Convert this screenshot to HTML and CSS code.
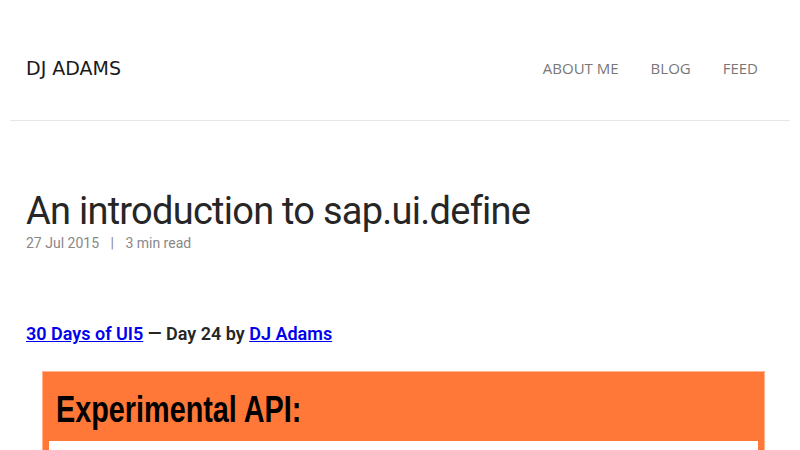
FILE: index.html
```html
<!DOCTYPE html>
<html lang="en">
<head>
<meta charset="utf-8">
<title>An introduction to sap.ui.define</title>
<link rel="stylesheet" href="styles.css">
</head>
<body>
<div class="page">
  <header class="site-header">
    <a class="brand" href="#">DJ ADAMS</a>
    <nav class="nav">
      <a href="#">ABOUT ME</a>
      <a href="#">BLOG</a>
      <a href="#">FEED</a>
    </nav>
  </header>
  <main class="post">
    <h1 class="post-title">An introduction to sap.ui.define</h1>
    <div class="post-meta">27 Jul 2015 <span class="sep">|</span> 3 min read</div>
    <p class="series"><a href="#">30 Days of UI5</a> — Day 24 by <a href="#">DJ Adams</a></p>
    <div class="figure">
      <div class="figure-head"><span class="figure-title">Experimental API:</span></div>
      <div class="figure-body"></div>
    </div>
  </main>
</div>
</body>
</html>
```
FILE: styles.css
```css
html, body { margin: 0; padding: 0; background: #fff; }
body { font-family: Roboto, "Noto Sans", sans-serif; color: #333; overflow: hidden; }
.page { padding: 0 10px; }
.site-header {
  display: flex;
  justify-content: space-between;
  align-items: center;
  height: 121px;
  box-sizing: border-box;
  padding: 16px 16px 0;
  border-bottom: 1px solid #e6e6e6;
}
.brand {
  font-family: "DejaVu Sans", sans-serif;
  font-size: 19px;
  color: #1a1a1a;
  text-decoration: none;
}
.nav { display: flex; gap: 32px; padding-right: 16px; }
.nav a {
  font-family: "Open Sans", sans-serif;
  font-size: 15px;
  color: #777;
  text-decoration: none;
}
.post { padding: 0 16px; }
.post-title {
  margin: 66px 0 0;
  font-family: Roboto, sans-serif;
  font-weight: 400;
  font-size: 38px;
  letter-spacing: -0.75px;
  line-height: 48px;
  color: #262626;
}
.post-meta { font-size: 14px; color: #888; margin-top: 0; }
.post-meta .sep { margin: 0 8px; }
.series {
  margin: 72px 0 0;
  font-size: 18px;
  font-weight: 600;
  color: #262626;
}
.series a { color: #0000ee; text-decoration: underline; }
.figure {
  margin: 27px 0 0 16px;
  width: 723px;
  background: #ff7838;
  border: 1px solid #ffb28d;
  padding: 6px 6px 0;
  box-sizing: border-box;
  height: 120px;
}
.figure-head {
  height: 63px;
  padding: 12px 0 0 7px;
  box-sizing: border-box;
}
.figure-title {
  display: inline-block;
  font-family: "Liberation Sans", Arial, sans-serif;
  font-weight: 700;
  font-size: 36px;
  line-height: 40px;
  color: #000;
  transform: scaleX(0.8);
  transform-origin: left center;
}
.figure-body { background: #fff; height: 60px; }
```
